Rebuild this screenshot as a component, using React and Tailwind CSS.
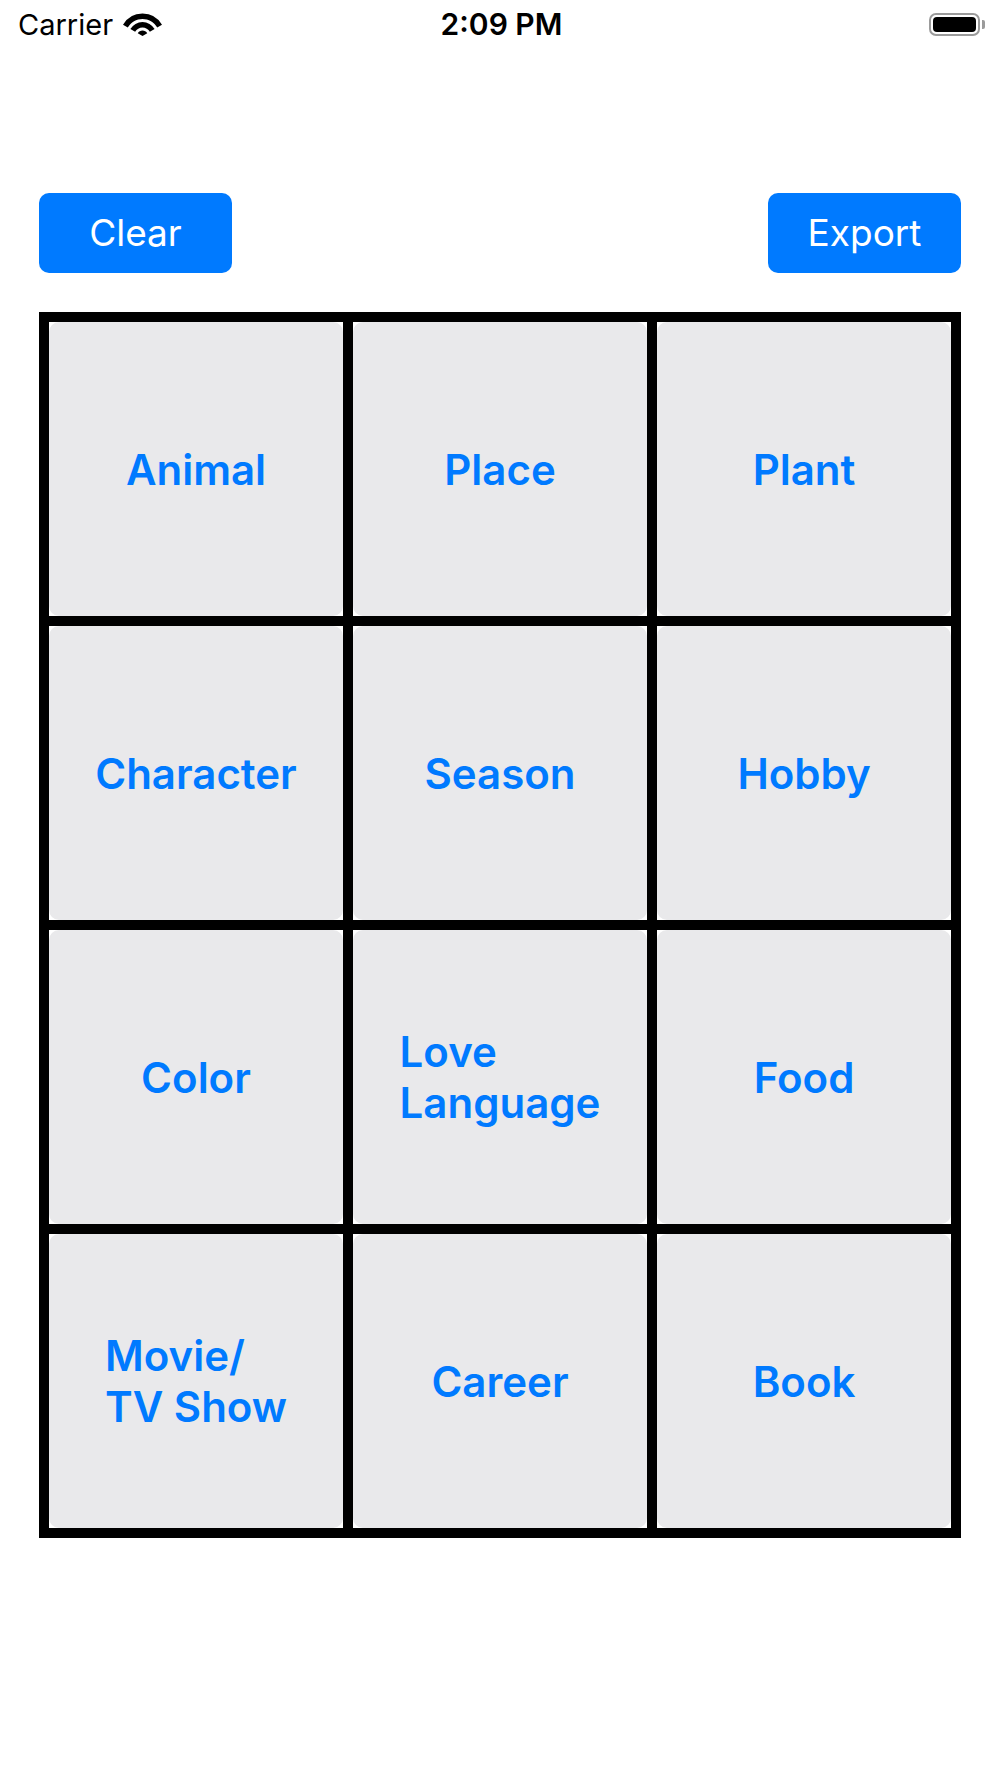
import React from 'react';

const CELLS = [
  ['Animal'],
  ['Place'],
  ['Plant'],
  ['Character'],
  ['Season'],
  ['Hobby'],
  ['Color'],
  ['Love', 'Language'],
  ['Food'],
  ['Movie/', 'TV Show'],
  ['Career'],
  ['Book']
];

function Wifi() {
  return (
    <svg width="39" height="23" viewBox="0 0 39 23" className="block">
      <path d="M0.01 11.75 A22.5 22.5 0 0 1 38.99 11.75 L34.22 14.5 A17 17 0 0 0 4.78 14.5 Z" fill="#000" />
      <path d="M7.38 16 A14 14 0 0 1 31.62 16 L26.86 18.75 A8.5 8.5 0 0 0 12.14 18.75 Z" fill="#000" />
      <path d="M19.5 23 L14.74 20.25 A5.5 5.5 0 0 1 24.26 20.25 Z" fill="#000" />
    </svg>
  );
}

function Battery() {
  return (
    <div className="flex items-center gap-[2px]">
      <div className="h-[23px] w-[51px] rounded-[7px] border-2 border-[#9b9b9b] p-[2px]">
        <div className="h-full w-full rounded-[4px] bg-black" />
      </div>
      <div className="h-[9px] w-[3px] rounded-r-[2px] bg-[#9b9b9b]" />
    </div>
  );
}

function StatusBar() {
  return (
    <div className="grid h-[48px] grid-cols-3 items-center pl-[18px] pr-[15px] text-black">
      <div className="flex items-center gap-[10px]">
        <span className="text-[29px] leading-none">Carrier</span>
        <Wifi />
      </div>
      <div className="text-center text-[30px] font-semibold leading-none">2:09 PM</div>
      <div className="flex justify-end">
        <Battery />
      </div>
    </div>
  );
}

// each cell: white square behind a rounded grey tile, so the corners show white
function Cell({ lines }) {
  return (
    <div className="h-[294px] bg-white">
      <div className="flex h-full items-center justify-center rounded-[10px] bg-[#e9e9eb]">
        <p className="text-left text-[42px] font-semibold leading-[51px] text-[#007aff]">
          {lines.map((l, i) => (
            <span key={i} className="block">
              {l}
            </span>
          ))}
        </p>
      </div>
    </div>
  );
}

export default function App() {
  return (
    <div className="min-h-[1778px] bg-white" style={{ fontFamily: 'Inter, "Noto Sans", sans-serif' }}>
      <StatusBar />

      <div className="mt-[145px] flex justify-between px-[39px]">
        <button className="h-[80px] w-[193px] rounded-[10px] bg-[#007aff] text-[37px] text-white">
          Clear
        </button>
        <button className="h-[80px] w-[193px] rounded-[10px] bg-[#007aff] text-[37px] text-white">
          Export
        </button>
      </div>

      <div className="mx-[39px] mt-[39px] grid grid-cols-3 gap-[10px] bg-black p-[10px]">
        {CELLS.map((lines, i) => (
          <Cell key={i} lines={lines} />
        ))}
      </div>
    </div>
  );
}
